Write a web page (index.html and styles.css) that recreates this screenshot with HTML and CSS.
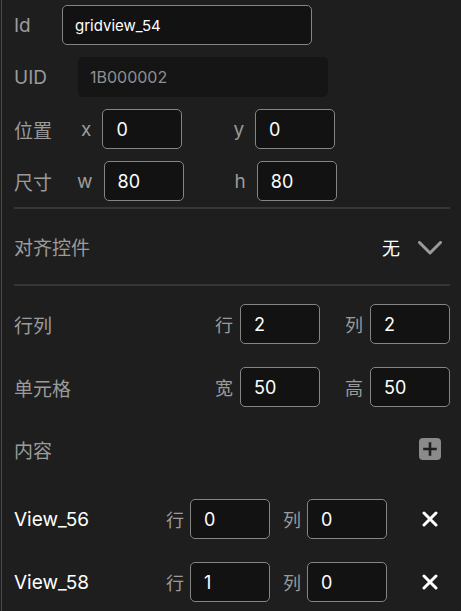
FILE: index.html
```html
<!DOCTYPE html>
<html lang="zh">
<head>
<meta charset="utf-8">
<title>Grid view properties</title>
<link rel="stylesheet" href="styles.css">
</head>
<body>
<div class="panel">
  <div class="row r-id">
    <span class="label w-id">Id</span>
    <input class="field f-wide f-text" value="gridview_54">
  </div>
  <div class="row r-uid">
    <span class="label w-uid">UID</span>
    <div class="field f-wide f-read">1B000002</div>
  </div>
  <div class="row r-pos">
    <span class="label w-pos">位置</span>
    <span class="axis">x</span>
    <input class="field f-num" value="0">
    <span class="axis axis-2">y</span>
    <input class="field f-num" value="0">
  </div>
  <div class="row r-size">
    <span class="label w-size">尺寸</span>
    <span class="axis">w</span>
    <input class="field f-num" value="80">
    <span class="axis axis-2">h</span>
    <input class="field f-num" value="80">
  </div>

  <div class="divider d-1"></div>
  <div class="row r-align">
    <span class="label grow">对齐控件</span>
    <span class="value">无</span>
    <span class="icon-col">
      <svg class="chevron" width="24" height="14" viewBox="0 0 24 14"><polyline points="1.5,1.5 12,12 22.5,1.5" fill="none" stroke="#9a9a9a" stroke-width="3" stroke-linecap="round" stroke-linejoin="round"/></svg>
    </span>
  </div>
  <div class="divider"></div>

  <div class="row r-grid">
    <span class="label grow">行列</span>
    <span class="sub">行</span>
    <input class="field f-num" value="2">
    <span class="sub sub-2">列</span>
    <input class="field f-num" value="2">
  </div>
  <div class="row r-cell">
    <span class="label grow">单元格</span>
    <span class="sub">宽</span>
    <input class="field f-num" value="50">
    <span class="sub sub-2">高</span>
    <input class="field f-num" value="50">
  </div>

  <div class="row r-content">
    <span class="label grow">内容</span>
    <span class="icon-col">
      <span class="add-btn">
        <svg width="22" height="22" viewBox="0 0 22 22"><path d="M11 5.5v11M5.5 11h11" stroke="#1e1e1e" stroke-width="2.6" stroke-linecap="square"/></svg>
      </span>
    </span>
  </div>

  <div class="row r-view r-view-1">
    <span class="name grow">View_56</span>
    <span class="sub">行</span>
    <input class="field f-num" value="0">
    <span class="sub sub-3">列</span>
    <input class="field f-num" value="0">
    <span class="icon-col x-col">
      <svg width="16" height="16" viewBox="0 0 16 16"><path d="M2 2L14 14M14 2L2 14" stroke="#ffffff" stroke-width="3" stroke-linecap="round"/></svg>
    </span>
  </div>
  <div class="row r-view r-view-2">
    <span class="name grow">View_58</span>
    <span class="sub">行</span>
    <input class="field f-num" value="1">
    <span class="sub sub-3">列</span>
    <input class="field f-num" value="0">
    <span class="icon-col x-col">
      <svg width="16" height="16" viewBox="0 0 16 16"><path d="M2 2L14 14M14 2L2 14" stroke="#ffffff" stroke-width="3" stroke-linecap="round"/></svg>
    </span>
  </div>
</div>
</body>
</html>
```

FILE: styles.css
```css
html, body {
  margin: 0;
  padding: 0;
  background: #1e1e1e;
}

body {
  font-family: Inter, "Noto Sans CJK SC", sans-serif;
  color: #9b9b9b;
  width: 461px;
  height: 611px;
  overflow: hidden;
}

.panel {
  margin-left: 1px;
  border-left: 1px solid #4a4a4a;
  padding: 5px 11px 0 12px;
  height: 611px;
  box-sizing: border-box;
}

.row {
  display: flex;
  align-items: center;
  height: 40px;
}

.label {
  font-size: 19px;
  color: #9b9b9b;
  white-space: nowrap;
}

.grow {
  flex: 1;
}

.w-id { width: 48px; }
.w-uid { width: 64px; }
.w-pos { width: 67px; }
.w-size { width: 63px; }

.r-uid, .r-pos, .r-size {
  margin-top: 12px;
}

.field {
  box-sizing: border-box;
  height: 40px;
  border: 1px solid #858585;
  border-radius: 5px;
  background: #121212;
  color: #ffffff;
  font-family: Inter, "Noto Sans CJK SC", sans-serif;
  padding: 0 0 0 12px;
  margin: 0;
  outline: none;
}

.f-wide {
  width: 250px;
}

.f-text {
  font-size: 15px;
}

.f-read {
  display: flex;
  align-items: center;
  border: none;
  background: #151515;
  color: #8f8f8f;
  font-size: 16px;
  padding-left: 12px;
}

.f-num {
  width: 80px;
  font-size: 18px;
  padding-left: 13px;
}

.axis {
  font-size: 19px;
  color: #9b9b9b;
  margin-right: 11px;
}

.axis-2 {
  margin-left: 51px;
}

.divider {
  height: 2px;
  background: #363636;
}

.d-1 {
  margin-top: 6px;
}

.r-align {
  height: 75px;
}

.value {
  font-size: 18px;
  color: #ffffff;
  margin-right: 10px;
}

.icon-col {
  width: 40px;
  display: flex;
  justify-content: center;
  align-items: center;
}

.chevron {
  display: block;
  margin-top: 2px;
}

.r-grid {
  margin-top: 18px;
}

.r-cell {
  margin-top: 23px;
}

.sub {
  font-size: 18px;
  color: #9b9b9b;
  width: 18px;
  margin-right: 7px;
}

.sub-2 {
  margin-left: 25px;
}

.r-content {
  margin-top: 20px;
  height: 44px;
}

.add-btn {
  width: 22px;
  height: 22px;
  border-radius: 4px;
  background: #8a8a8a;
  display: flex;
  align-items: center;
  justify-content: center;
}

.add-btn svg {
  display: block;
}

.r-view-1 {
  margin-top: 28px;
}

.r-view-2 {
  margin-top: 23px;
}

.name {
  font-size: 19px;
  color: #ffffff;
}

.r-view .sub {
  margin-right: 6px;
}

.sub-3 {
  margin-left: 13px;
}

.x-col {
  margin-left: 23px;
}

.x-col svg {
  display: block;
}
```
